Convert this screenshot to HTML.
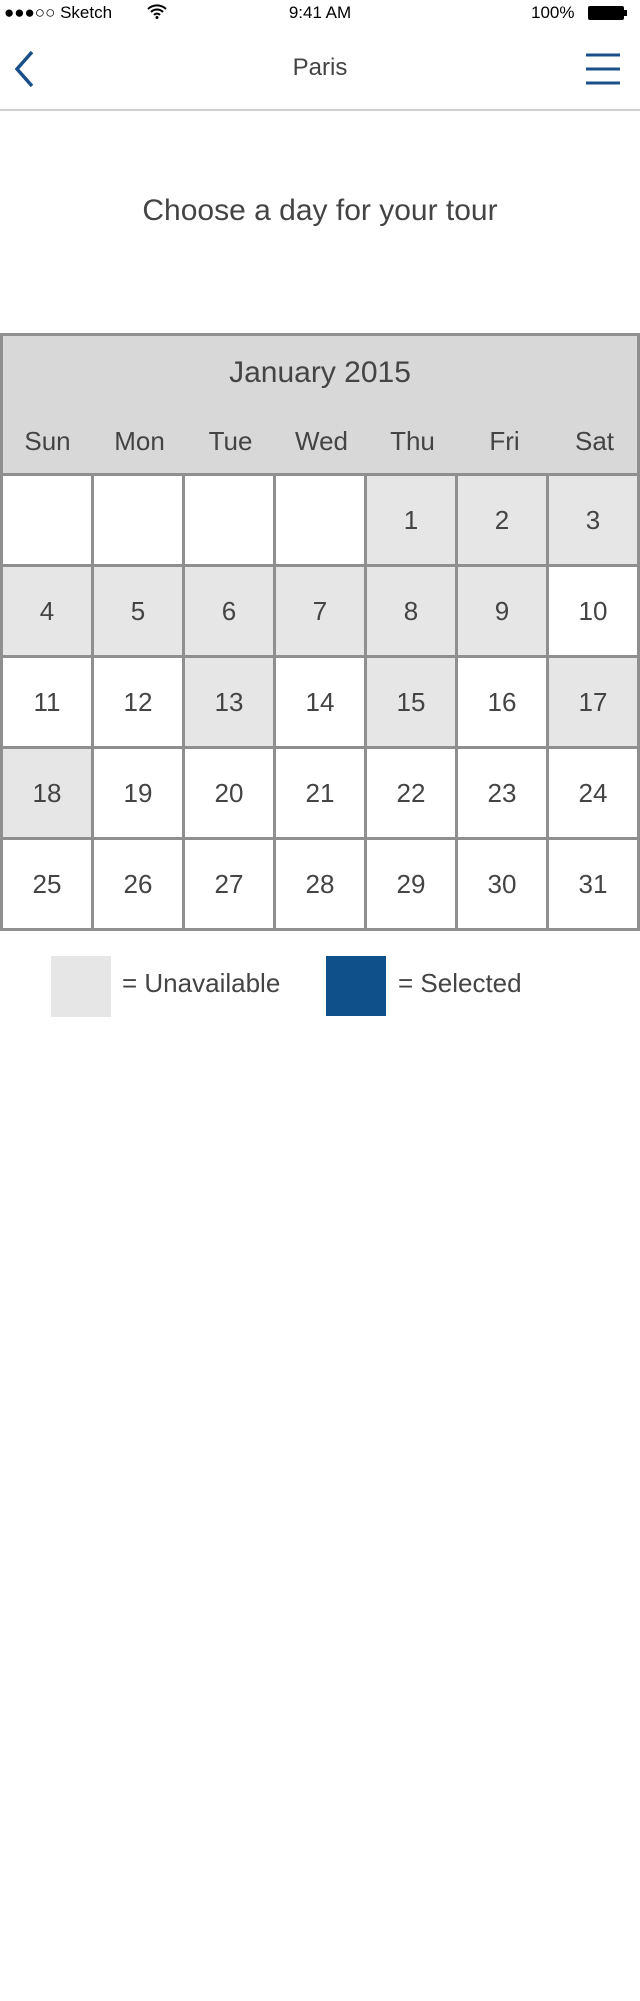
<!DOCTYPE html>
<html><head><meta charset="utf-8"><style>
*{margin:0;padding:0;box-sizing:border-box}
body{width:640px;height:2001px;background:#fff;font-family:"Liberation Sans",sans-serif;color:#444;position:relative;overflow:hidden}
.abs{position:absolute}
.sb{font-size:17px;color:#000;top:3px}
.nav{top:54px;width:640px;text-align:center;font-size:24px;color:#444}
.div{top:109px;left:0;width:640px;height:2px;background:#cfcfcf}
.title{top:194px;width:640px;text-align:center;font-size:30px;color:#444}
.cal{top:333px;left:0;width:640px;height:597px;border:3px solid #8f8f8f;background:#d8d8d8}
.month{top:356px;width:640px;text-align:center;font-size:30px}
.wd{top:426px;width:91px;text-align:center;font-size:26px}
.grid{left:0;top:473px;width:640px;display:grid;grid-template-columns:repeat(7,91px);grid-auto-rows:91px;border-right:3px solid #8f8f8f;border-bottom:3px solid #8f8f8f}
.cell{border-left:3px solid #8f8f8f;border-top:3px solid #8f8f8f;display:flex;align-items:center;justify-content:center;font-size:26px;background:#fff}
.g{background:#e6e6e6}
.leg{font-size:26px;top:968px}
</style></head><body>
<div class="abs sb" style="left:4px">●●●○○ Sketch</div>
<svg class="abs" style="left:146px;top:3px" width="22" height="16" viewBox="0 0 22 16"><path d="M2 6a13 13 0 0 1 18 0M5 9a8.5 8.5 0 0 1 12 0M8 12a4 4 0 0 1 6 0" stroke="#000" stroke-width="2" fill="none"/><circle cx="11" cy="14.5" r="1.5"/></svg>
<div class="abs sb" style="left:0;width:640px;text-align:center">9:41 AM</div>
<div class="abs sb" style="left:531px">100%</div>
<div class="abs" style="left:588px;top:6px;width:36px;height:14px;background:#000;border-radius:2px"></div>
<div class="abs" style="left:624px;top:10px;width:3px;height:6px;background:#000"></div>
<svg class="abs" style="left:12px;top:50px" width="24" height="38"><path d="M20 2L5 19L20 36" stroke="#1a5089" stroke-width="3.5" fill="none"/></svg>
<div class="abs nav">Paris</div>
<svg class="abs" style="left:585px;top:52px" width="36" height="34"><path d="M1 3H35M1 17H35M1 31H35" stroke="#1a5089" stroke-width="3"/></svg>
<div class="abs div"></div>
<div class="abs title">Choose a day for your tour</div>
<div class="abs cal"></div>
<div class="abs month">January 2015</div>

<div class="abs wd" style="left:2px">Sun</div>
<div class="abs wd" style="left:94px">Mon</div>
<div class="abs wd" style="left:185px">Tue</div>
<div class="abs wd" style="left:276px">Wed</div>
<div class="abs wd" style="left:367px">Thu</div>
<div class="abs wd" style="left:459px">Fri</div>
<div class="abs wd" style="left:549px">Sat</div>

<div class="abs grid">
<div class="cell"></div><div class="cell"></div><div class="cell"></div><div class="cell"></div><div class="cell g">1</div><div class="cell g">2</div><div class="cell g">3</div>
<div class="cell g">4</div><div class="cell g">5</div><div class="cell g">6</div><div class="cell g">7</div><div class="cell g">8</div><div class="cell g">9</div><div class="cell">10</div>
<div class="cell">11</div><div class="cell">12</div><div class="cell g">13</div><div class="cell">14</div><div class="cell g">15</div><div class="cell">16</div><div class="cell g">17</div>
<div class="cell g">18</div><div class="cell">19</div><div class="cell">20</div><div class="cell">21</div><div class="cell">22</div><div class="cell">23</div><div class="cell">24</div>
<div class="cell">25</div><div class="cell">26</div><div class="cell">27</div><div class="cell">28</div><div class="cell">29</div><div class="cell">30</div><div class="cell">31</div>
</div>

<div class="abs" style="left:51px;top:956px;width:60px;height:61px;background:#e6e6e6"></div>
<div class="abs leg" style="left:122px">= Unavailable</div>
<div class="abs" style="left:326px;top:956px;width:60px;height:60px;background:#0f4f8a"></div>
<div class="abs leg" style="left:398px">= Selected</div>
</body></html>
